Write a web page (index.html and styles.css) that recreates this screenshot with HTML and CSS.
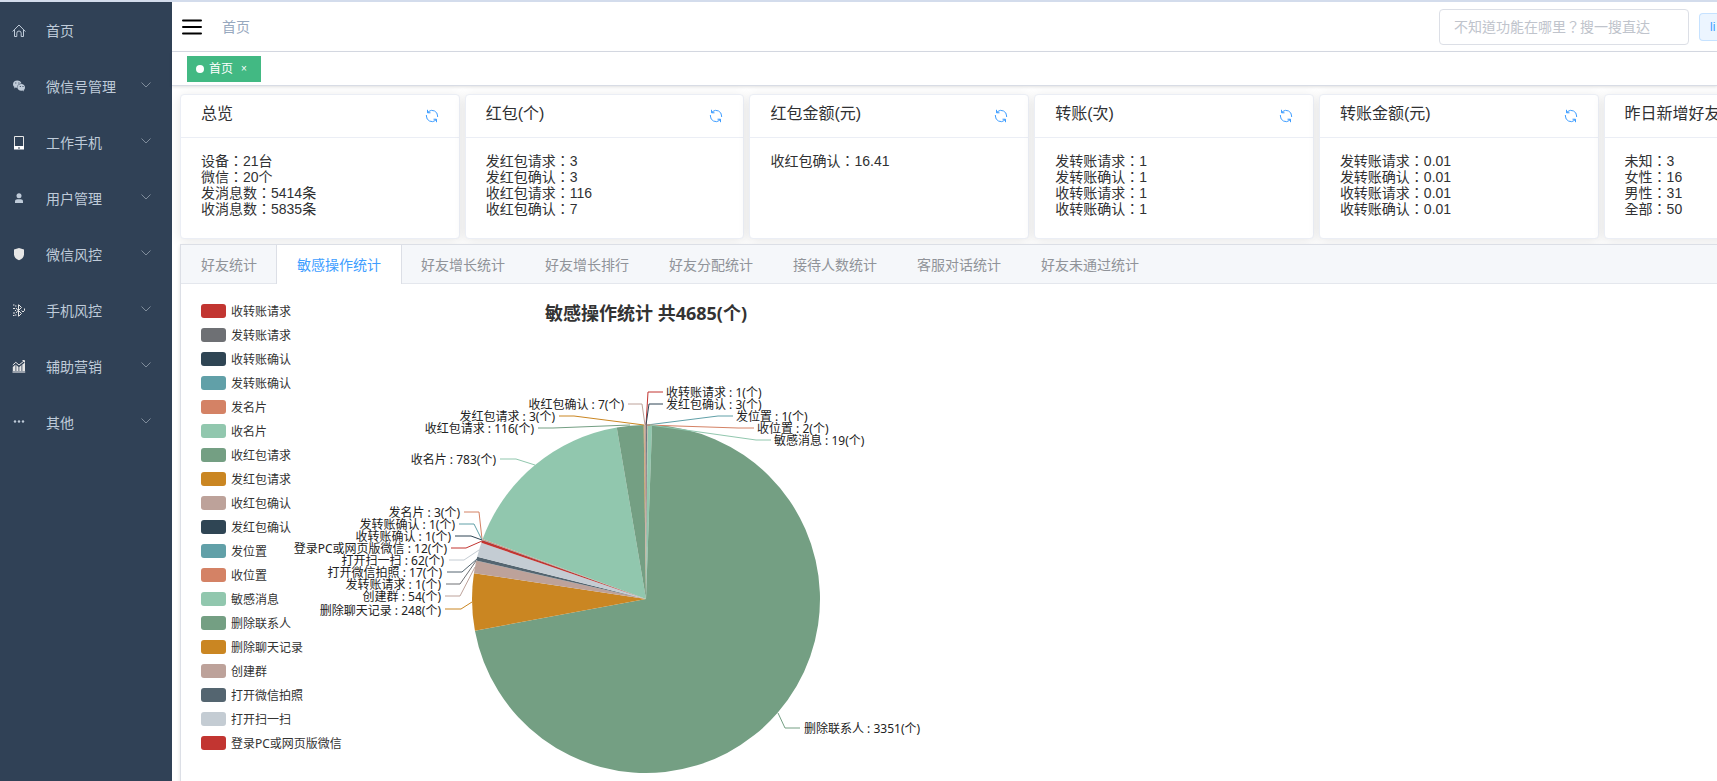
FILE: index.html
```html
<!DOCTYPE html>
<html lang="zh-CN">
<head>
<meta charset="utf-8">
<title>首页</title>
<link rel="stylesheet" href="styles.css">
</head>
<body>
<svg class="defs" aria-hidden="true">
  <symbol id="refresh" viewBox="0 0 14 14"><g fill="none" stroke="currentColor"><path d="M3.500 2.600A5.600 5.600 0 0 1 12.600 7v1M10.500 11.400A5.600 5.600 0 0 1 1.400 7V6"/><path d="M2.500.8v3h3M11.500 13.200v-3h-3"/></g><path d="M2.500 1.500v2.300h2.300zM11.500 12.500v-2.300H9.200z" fill="currentColor"/></symbol>
  <symbol id="arrow" viewBox="0 0 10 6"><path d="M.5.500 5 5 9.500.500" fill="none" stroke="currentColor"/></symbol>
</svg>
<div class="app">
  <nav class="sidebar">
    <a class="item" href="#"><svg class="icon" viewBox="0 0 14 14"><path d="M.6 7.500 7 1l6.400 6.500M2.500 6v6.500h2.300V9.200a2.200 2.200 0 0 1 4.400 0v3.300h2.300V6" fill="none" stroke="currentColor"/></svg><span>首页</span></a>
    <a class="item" href="#"><svg class="icon" viewBox="0 0 14 14"><path d="M5.300.500C2.800.500 1 2.100 1 4.200c0 1.200.6 2.200 1.500 2.900L2 8.500l1.700-.9c.5.200 1 .2 1.600.2C5 5.200 7 3.600 9.500 3.600 9.100 1.800 7.400.500 5.300.500Z" fill="currentColor"/><path d="M9.400 4.100c-2.300 0-4 1.400-4 3.300s1.700 3.300 4 3.300l1.100-.1 1.500.8-.4-1.300c.9-.6 1.400-1.600 1.400-2.700 0-1.900-1.600-3.300-3.600-3.300Z" fill="currentColor"/><path d="M3.300 3h1M6.400 3h1M7.800 6.500h1M10.500 6.500h1" stroke="#304156"/></svg><span>微信号管理</span><svg class="arrow"><use href="#arrow"/></svg></a>
    <a class="item" href="#"><svg class="icon bright" viewBox="0 0 14 14"><path d="M2.500.500h9v12h-9z" fill="none" stroke="currentColor"/><path d="M2 10h10v3.500H2z" fill="#fff"/><path d="M6 12h2" stroke="#304156"/></svg><span>工作手机</span><svg class="arrow"><use href="#arrow"/></svg></a>
    <a class="item" href="#"><svg class="icon" viewBox="0 0 14 14"><circle cx="7" cy="3.800" r="2.500" fill="currentColor"/><path d="M3 11v-1.500c0-1.500 1-2.300 2.300-2.300h3.400c1.300 0 2.300.8 2.300 2.300V11z" fill="currentColor"/></svg><span>用户管理</span><svg class="arrow"><use href="#arrow"/></svg></a>
    <a class="item" href="#"><svg class="icon bright" viewBox="0 0 14 14"><path d="M7 0 12 1.500v4.800c0 3-2 5-5 6-3-1-5-3-5-6V1.500z" fill="currentColor"/></svg><span>微信风控</span><svg class="arrow"><use href="#arrow"/></svg></a>
    <a class="item" href="#"><svg class="icon bright" viewBox="0 0 14 14"><path d="M6.500.500v12M7 1 9.500 3.500 7 6M7 7l2.500 2.500L7 12M4 4l2 2.500L4 9M9.500 6.500 11 8l1.500-1.500V4.500" fill="none" stroke="currentColor"/><path d="M1 1h1.500M3 2h1.500M1 4.500h2M1 9h2M3 6.500h1M1 11.500h1.500M3 11h1.500" stroke="currentColor"/></svg><span>手机风控</span><svg class="arrow"><use href="#arrow"/></svg></a>
    <a class="item" href="#"><svg class="icon bright" viewBox="0 0 14 14"><path d="M.8 7 3.500 4.500v6.500H.8zM4.300 5 6.500 7v4H4.300zM7.300 7 9.500 5v6H7.300zM10.300 4.500 13 2.500V11h-2.700z" fill="currentColor"/><path d="M.5 11h12.700v2H.5z" fill="#98a0ab"/><path d="m.8 5 3-2.700L7 5l5-4M10.500.500h2v2" fill="none" stroke="currentColor"/></svg><span>辅助营销</span><svg class="arrow"><use href="#arrow"/></svg></a>
    <a class="item" href="#"><svg class="icon" viewBox="0 0 14 14"><g fill="currentColor"><circle cx="3" cy="5.500" r="1.200"/><circle cx="7" cy="5.500" r="1.200"/><circle cx="11" cy="5.500" r="1.200"/></g></svg><span>其他</span><svg class="arrow"><use href="#arrow"/></svg></a>
  </nav>
  <div class="main">
    <header class="navbar">
      <button class="menu-toggle" type="button" aria-label="菜单"><svg viewBox="0 0 20 16"><path d="M1 1.500h18M1 8h18M1 14.500h18" stroke="#000" stroke-width="2" stroke-linecap="round"/></svg></button>
      <a class="crumb" href="#">首页</a>
      <input class="search" type="text" aria-label="搜索功能" placeholder="不知道功能在哪里？搜一搜直达">
      <span class="user">li</span>
    </header>
    <div class="views">
      <a class="view" href="#"><i class="dot"></i>首页<button class="close" type="button" aria-label="关闭">×</button></a>
    </div>
    <main class="content">
      <div class="cards">
        <section class="card"><header><h2>总览</h2><button type="button" aria-label="刷新"><svg><use href="#refresh"/></svg></button></header><ul><li>设备：21台</li><li>微信：20个</li><li>发消息数：5414条</li><li>收消息数：5835条</li></ul></section>
        <section class="card"><header><h2>红包(个)</h2><button type="button" aria-label="刷新"><svg><use href="#refresh"/></svg></button></header><ul><li>发红包请求：3</li><li>发红包确认：3</li><li>收红包请求：116</li><li>收红包确认：7</li></ul></section>
        <section class="card"><header><h2>红包金额(元)</h2><button type="button" aria-label="刷新"><svg><use href="#refresh"/></svg></button></header><ul><li>收红包确认：16.41</li></ul></section>
        <section class="card"><header><h2>转账(次)</h2><button type="button" aria-label="刷新"><svg><use href="#refresh"/></svg></button></header><ul><li>发转账请求：1</li><li>发转账确认：1</li><li>收转账请求：1</li><li>收转账确认：1</li></ul></section>
        <section class="card"><header><h2>转账金额(元)</h2><button type="button" aria-label="刷新"><svg><use href="#refresh"/></svg></button></header><ul><li>发转账请求：0.01</li><li>发转账确认：0.01</li><li>收转账请求：0.01</li><li>收转账确认：0.01</li></ul></section>
        <section class="card"><header><h2>昨日新增好友</h2></header><ul><li>未知：3</li><li>女性：16</li><li>男性：31</li><li>全部：50</li></ul></section>
      </div>
      <section class="panel">
        <div class="tabs" role="tablist">
          <button role="tab" type="button">好友统计</button>
          <button role="tab" type="button" class="active" aria-selected="true">敏感操作统计</button>
          <button role="tab" type="button">好友增长统计</button>
          <button role="tab" type="button">好友增长排行</button>
          <button role="tab" type="button">好友分配统计</button>
          <button role="tab" type="button">接待人数统计</button>
          <button role="tab" type="button">客服对话统计</button>
          <button role="tab" type="button">好友未通过统计</button>
        </div>
        <div class="chart">
          <ul class="legend">
            <li class="red">收转账请求</li>
            <li class="gray">发转账请求</li>
            <li class="navy">收转账确认</li>
            <li class="teal">发转账确认</li>
            <li class="coral">发名片</li>
            <li class="mint">收名片</li>
            <li class="green">收红包请求</li>
            <li class="amber">发红包请求</li>
            <li class="rose">收红包确认</li>
            <li class="navy">发红包确认</li>
            <li class="teal">发位置</li>
            <li class="coral">收位置</li>
            <li class="mint">敏感消息</li>
            <li class="green">删除联系人</li>
            <li class="amber">删除聊天记录</li>
            <li class="rose">创建群</li>
            <li class="slate">打开微信拍照</li>
            <li class="silver">打开扫一扫</li>
            <li class="red">登录PC或网页版微信</li>
          </ul>
          <svg class="plot" viewBox="0 0 900 600">
            <text class="title" x="450" y="21">敏感操作统计 共4685(个)</text>
            <g id="slices"></g>
            <g class="lines">
              <path class="red" d="M467 93H452L450 126"/>
              <path class="navy" d="M467 105H453L450 126"/>
              <path class="teal" d="M537 117H522L451 126"/>
              <path class="coral" d="M558 129H542L451 126"/>
              <path class="mint" d="M575 141H560L454 126"/>
              <path class="green" d="M604 429H589L582 414"/>
              <path class="rose" d="M432 105H446L449 126"/>
              <path class="amber" d="M363 117H378L448 126"/>
              <path class="green" d="M342 129H357L434 126"/>
              <path class="mint" d="M304 160H320L339 166"/>
              <path class="coral" d="M268 213H283L286 240"/>
              <path class="teal" d="M263 225H278L286 241"/>
              <path class="navy" d="M259 237H275L286 241"/>
              <path class="red" d="M255 249H270L286 242"/>
              <path class="silver" d="M253 261H268L283 251"/>
              <path class="slate" d="M251 273H266L281 260"/>
              <path class="gray" d="M250 285H264L280 262"/>
              <path class="rose" d="M249 297H264L279 268"/>
              <path class="amber" d="M249 310H265L276 303"/>
            </g>
            <g class="labels">
              <text x="470" y="98">收转账请求 : 1(个)</text>
              <text x="470" y="110">发红包确认 : 3(个)</text>
              <text x="540" y="122">发位置 : 1(个)</text>
              <text x="561" y="134">收位置 : 2(个)</text>
              <text x="578" y="146">敏感消息 : 19(个)</text>
              <text x="608" y="434">删除联系人 : 3351(个)</text>
            </g>
            <g class="labels left">
              <text x="428" y="110">收红包确认 : 7(个)</text>
              <text x="359" y="122">发红包请求 : 3(个)</text>
              <text x="338" y="134">收红包请求 : 116(个)</text>
              <text x="300" y="165">收名片 : 783(个)</text>
              <text x="264" y="218">发名片 : 3(个)</text>
              <text x="259" y="230">发转账确认 : 1(个)</text>
              <text x="255" y="242">收转账确认 : 1(个)</text>
              <text x="251" y="254">登录PC或网页版微信 : 12(个)</text>
              <text x="248" y="266">打开扫一扫 : 62(个)</text>
              <text x="246" y="278">打开微信拍照 : 17(个)</text>
              <text x="245" y="290">发转账请求 : 1(个)</text>
              <text x="245" y="302">创建群 : 54(个)</text>
              <text x="245" y="316">删除聊天记录 : 248(个)</text>
            </g>
          </svg>
        </div>
      </section>
    </main>
  </div>
</div>
<script src="chart.js"></script>
</body>
</html>
```
FILE: chart.js
```js
// Slices run clockwise from twelve o'clock.
const slices = [
  ["red", 1], ["navy", 3], ["teal", 1], ["coral", 2], ["mint", 19],
  ["green", 3351], ["amber", 248], ["rose", 54], ["gray", 1], ["slate", 17],
  ["silver", 62], ["red", 12], ["navy", 1], ["teal", 1], ["coral", 3],
  ["mint", 783], ["green", 116], ["amber", 3], ["rose", 7]
];
const cx = 450, cy = 300, r = 174;
const total = slices.reduce((sum, s) => sum + s[1], 0);
const point = v => {
  const a = v / total * 2 * Math.PI;
  return (cx + r * Math.sin(a)) + " " + (cy - r * Math.cos(a));
};
let start = 0;
for (const [color, value] of slices) {
  const path = document.createElementNS("http://www.w3.org/2000/svg", "path");
  const large = value > total / 2 ? 1 : 0;
  path.setAttribute("class", color);
  path.setAttribute("d", `M${cx} ${cy}L${point(start)}A${r} ${r} 0 ${large} 1 ${point(start + value)}Z`);
  document.getElementById("slices").append(path);
  start += value;
}
```
FILE: styles.css
```css
* { box-sizing: border-box; }
body, ul, h2 { margin: 0; padding: 0; }
ul { list-style: none; }
a { color: inherit; text-decoration: none; }
button { border: 0; padding: 0; background: none; font: inherit; color: inherit; cursor: pointer; }
body { font: 14px/16px "Liberation Sans", "Noto Sans CJK SC", sans-serif; color: #303133; background: #fff; }
.defs { position: absolute; width: 0; height: 0; }

.red { --c: #c23531; }
.gray { --c: #6e7074; }
.navy { --c: #2f4554; }
.teal { --c: #61a0a8; }
.coral { --c: #d48265; }
.mint { --c: #91c7ae; }
.green { --c: #749f83; }
.amber { --c: #ca8622; }
.rose { --c: #bda29a; }
.slate { --c: #546570; }
.silver { --c: #c4ccd3; }

.app { display: flex; height: 100vh; overflow: hidden; border-top: 2px solid #d3dcec; }
.sidebar { flex: 0 0 172px; padding-top: 1px; background: #304156; color: #bfcbd9; }
.item { display: flex; align-items: center; height: 56px; padding: 0 21px 0 12px; }
.icon { width: 14px; height: 14px; margin-right: 20px; }
.bright { color: #e6e6e6; }
.arrow { width: 10px; height: 6px; margin: 0 0 4px auto; color: #7f8c9b; }

.main { flex: 1; min-width: 0; }
.navbar { display: flex; align-items: center; height: 50px; padding-left: 10px; border-bottom: 1px solid #d8dce5; }
.menu-toggle { width: 20px; height: 16px; }
.menu-toggle svg { display: block; }
.crumb { margin-left: 20px; color: #97a8be; }
.search { width: 250px; height: 36px; margin: 0 10px 0 auto; padding: 0 15px 2px 14px; border: 1px solid #dcdfe6; border-radius: 4px; font: inherit; font-family: "Noto Sans CJK TC", sans-serif; font-feature-settings: "locl" 0; color: #606266; outline: 0; }
.search::placeholder { color: #c0c4cc; }
.user { width: 18px; height: 28px; padding-left: 10px; border: 1px solid #c6e2ff; border-right: 0; border-radius: 4px 0 0 4px; background: #ecf5ff; color: #409eff; font-size: 12px; line-height: 26px; }
.views { display: flex; align-items: center; height: 34px; padding-left: 15px; border-bottom: 1px solid #d8dce5; box-shadow: 0 1px 3px rgba(0, 0, 0, .12); }
.view { display: flex; align-items: center; height: 26px; padding: 0 9px; background: #42b983; color: #fff; font-size: 12px; }
.dot { width: 8px; height: 8px; margin-right: 5px; border-radius: 50%; background: #fff; }
.close { width: 16px; margin-left: 3px; font-size: 10px; line-height: 16px; }

.content { padding: 8px 0 0 8px; }
.cards { display: flex; gap: 5px; }
.card { flex: 0 0 18.2%; min-height: 145px; border: 1px solid #ebeef5; border-radius: 4px; background: #fff; box-shadow: 0 2px 12px rgba(0, 0, 0, .1); font-family: "Liberation Sans", "Noto Sans CJK TC", sans-serif; font-feature-settings: "locl" 0; }
.card header { display: flex; justify-content: space-between; height: 43px; padding: 9px 20px 0; border-bottom: 1px solid #ebeef5; }
.card h2 { font-size: 16px; line-height: 20px; font-weight: 400; white-space: nowrap; }
.card button { height: 14px; margin-top: 5px; color: #409eff; }
.card button svg { display: block; width: 14px; height: 14px; }
.card ul { padding: 15px 20px; }

.panel { margin-top: 5px; border: 1px solid #dcdfe6; border-right: 0; background: #fff; box-shadow: 0 2px 4px rgba(0, 0, 0, .12); position: relative; }
.tabs { display: flex; height: 39px; background: #f5f7fa; border-bottom: 1px solid #e4e7ed; color: #909399; }
.tabs button { height: 39px; padding: 0 20px; white-space: nowrap; }
.tabs .active { margin: 0 -1px; background: #fff; border: solid #dcdfe6; border-width: 0 1px; color: #409eff; }

.chart { position: relative; width: 900px; min-height: 600px; margin: 15px; font-family: "Noto Sans", "Noto Sans CJK SC", sans-serif; }
.legend { padding: 5px; color: #333; font-size: 12px; }
.legend li { display: flex; align-items: flex-start; gap: 5px; height: 14px; margin-bottom: 10px; }
.legend li::before { content: ""; width: 25px; height: 14px; border-radius: 3px; background: var(--c); }
.plot { position: absolute; top: 0; left: 0; width: 900px; height: 600px; }
.plot path { fill: var(--c); }
.lines path { fill: none; stroke: var(--c); }
.labels { font-size: 12px; fill: #222; }
.left { text-anchor: end; }
.title { font-size: 18px; font-weight: 700; fill: #333; text-anchor: middle; }
```
